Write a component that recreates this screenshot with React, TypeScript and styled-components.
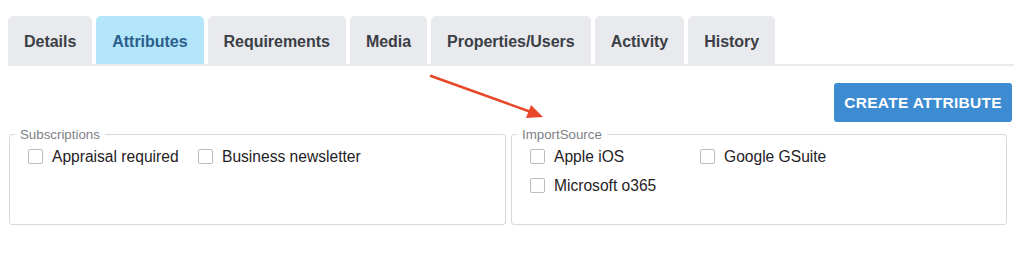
import React from "react";
import styled, { createGlobalStyle } from "styled-components";

const GlobalStyle = createGlobalStyle`
    body {
        margin: 0;
        background: #ffffff;
        font-family: "Liberation Sans", Arial, sans-serif;
    }
`;

const Page = styled.div`
    position: relative;
    width: 1024px;
    height: 257px;
    padding: 16px 10px 0 8px;
    box-sizing: border-box;
`;

const TabBar = styled.div`
    display: flex;
    gap: 4px;
    border-bottom: 2px solid #e8eaee;
`;

const Tab = styled.div<{ active?: boolean }>`
    height: 48px;
    padding: 3px 16px 0;
    box-sizing: border-box;
    display: flex;
    align-items: center;
    border-radius: 5px 5px 0 0;
    background: ${(p) => (p.active ? "#b3e5fb" : "#e9eaee")};
    color: ${(p) => (p.active ? "#2b5f8c" : "#3b3f45")};
    font-weight: 700;
    font-size: 16px;
    letter-spacing: -0.03px;
`;

const Toolbar = styled.div`
    display: flex;
    justify-content: flex-end;
    padding: 17px 2px 0 0;
`;

const CreateButton = styled.button`
    height: 39px;
    padding: 0 10px;
    border: none;
    border-radius: 3px;
    background: #3d8bd0;
    color: #ffffff;
    font-family: inherit;
    font-weight: 700;
    font-size: 15.5px;
    letter-spacing: 0.3px;
`;

const Groups = styled.div`
    display: grid;
    grid-template-columns: 497px 496px;
    gap: 5px;
    margin: 5px 0 0 1px;
`;

const Group = styled.fieldset`
    margin: 0;
    min-width: 0;
    height: 98px;
    box-sizing: border-box;
    padding: 0 0 0 18px;
    border: 1px solid #d6d9dd;
    border-radius: 3px;
    display: flex;
    flex-wrap: wrap;
    align-content: flex-start;
`;

const Legend = styled.legend`
    padding: 0 5px;
    margin-left: -13px;
    font-size: 13.3px;
    color: #7d8288;
`;

const Option = styled.label`
    width: 170px;
    height: 29px;
    display: flex;
    align-items: center;
    gap: 9px;
    font-size: 15.6px;
    color: #1f2226;
    white-space: nowrap;
`;

const Box = styled.span`
    width: 13px;
    height: 13px;
    flex: none;
    border: 1px solid #b9bdc3;
    border-radius: 2px;
    background: #ffffff;
`;

const Arrow = styled.svg`
    position: absolute;
    left: 425px;
    top: 70px;
`;

const tabs = ["Details", "Attributes", "Requirements", "Media", "Properties/Users", "Activity", "History"];

const groups = [
    { name: "Subscriptions", options: ["Appraisal required", "Business newsletter"] },
    { name: "ImportSource", options: ["Apple iOS", "Google GSuite", "Microsoft o365"] },
];

const App: React.FC = () => {
    return (
        <Page>
            <GlobalStyle />
            <TabBar>
                {tabs.map((t) => (
                    <Tab key={t} active={t === "Attributes"}>
                        {t}
                    </Tab>
                ))}
            </TabBar>
            <Toolbar>
                <CreateButton>CREATE ATTRIBUTE</CreateButton>
            </Toolbar>
            <Groups>
                {groups.map((g) => (
                    <Group key={g.name}>
                        <Legend>{g.name}</Legend>
                        {g.options.map((o) => (
                            <Option key={o}>
                                <Box />
                                {o}
                            </Option>
                        ))}
                    </Group>
                ))}
            </Groups>
            <Arrow width="130" height="55" viewBox="0 0 130 55">
                <line x1="6" y1="6" x2="106" y2="42" stroke="#e8472a" strokeWidth="2.5" strokeLinecap="round" />
                <polygon points="118,47 101,48 106,35" fill="#e8472a" />
            </Arrow>
        </Page>
    );
};

export default App;
